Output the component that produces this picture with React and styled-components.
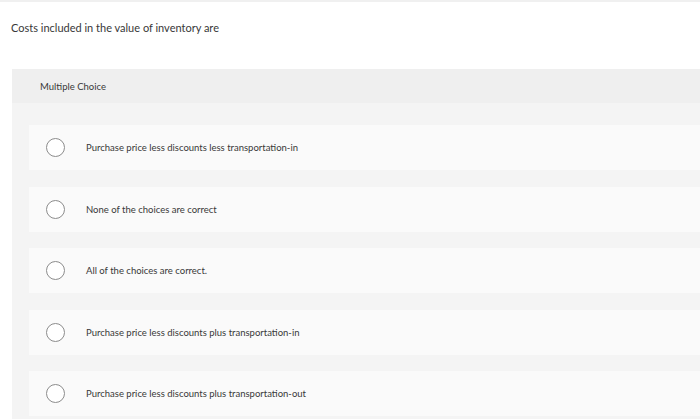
import React from "react";
import styled, { createGlobalStyle } from "styled-components";

const GlobalStyle = createGlobalStyle`
  html, body {
    margin: 0;
    padding: 0;
    background: #ffffff;
  }
  body {
    font-family: Lato, "Open Sans", "Liberation Sans", sans-serif;
    color: #333333;
  }
`;

const Page = styled.div`
  width: 700px;
  height: 420px;
  overflow: hidden;
  border-top: 2px solid #f0f0f0;
  box-sizing: border-box;
`;

const Question = styled.p`
  margin: 0;
  padding: 18px 0 0 11px;
  height: 49px;
  box-sizing: border-box;
  font-size: 11px;
  line-height: 16px;
  color: #383838;
`;

const Panel = styled.section`
  margin: 18px 0 0 12px;
  background: #f4f4f4;
  height: 350px;
`;

const PanelHeader = styled.div`
  display: flex;
  align-items: center;
  height: 34px;
  padding-left: 28px;
  background: #efefef;
  font-size: 9.5px;
  color: #383838;
`;

const Choices = styled.ul`
  list-style: none;
  margin: 0;
  padding: 22px 0 0 17px;
  display: flex;
  flex-direction: column;
  gap: 16.5px;
`;

const Choice = styled.li`
  display: flex;
  align-items: center;
  gap: 21px;
  height: 45px;
  padding-left: 17px;
  background: #fafafa;
  font-size: 9.5px;
  color: #383838;
`;

const Radio = styled.span`
  flex: none;
  width: 19px;
  height: 19px;
  border-radius: 50%;
  border: 1.5px solid #8c8c8c;
  box-sizing: border-box;
  background: #ffffff;
`;

const choices = [
  "Purchase price less discounts less transportation-in",
  "None of the choices are correct",
  "All of the choices are correct.",
  "Purchase price less discounts plus transportation-in",
  "Purchase price less discounts plus transportation-out",
];

export default function App() {
  return (
    <>
      <GlobalStyle />
      <Page>
        <Question>Costs included in the value of inventory are</Question>
        <Panel>
          <PanelHeader>Multiple Choice</PanelHeader>
          <Choices>
            {choices.map((text) => (
              <Choice key={text}>
                <Radio />
                <span>{text}</span>
              </Choice>
            ))}
          </Choices>
        </Panel>
      </Page>
    </>
  );
}
